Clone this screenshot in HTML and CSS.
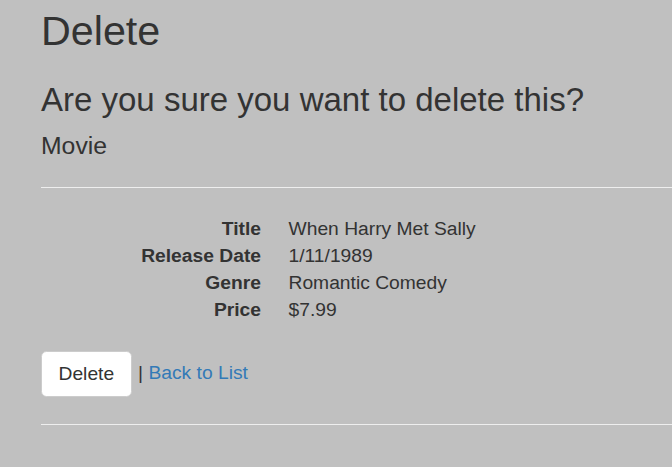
FILE: index.html
```html
<!DOCTYPE html>
<html>
<head>
<meta charset="utf-8">
<title>Delete</title>
<link rel="stylesheet" href="styles.css">
</head>
<body>
<div class="container body-content">
  <h2 class="page-title">Delete</h2>
  <h3 class="confirm">Are you sure you want to delete this?</h3>
  <div>
    <h4 class="entity">Movie</h4>
    <hr class="rule">
    <dl class="details">
      <dt>Title</dt>
      <dd>When Harry Met Sally</dd>
      <dt>Release Date</dt>
      <dd>1/11/1989</dd>
      <dt>Genre</dt>
      <dd>Romantic Comedy</dd>
      <dt>Price</dt>
      <dd>$7.99</dd>
    </dl>
    <form class="actions-form">
      <div class="form-actions">
        <button type="button" class="btn">Delete</button> <span class="sep">|</span> <a class="link" href="#">Back to List</a>
      </div>
    </form>
  </div>
  <hr class="rule">
</div>
</body>
</html>
```
FILE: styles.css
```css
html, body {
  margin: 0;
  padding: 0;
  background: #c0c0c0;
}
body {
  font-family: "Liberation Sans", Arial, sans-serif;
  font-size: 19.25px;
  line-height: 27px;
  color: #333;
  overflow: hidden;
}
.container {
  padding: 9px 0 0 41px;
}
.page-title {
  font-size: 41.25px;
  font-weight: 500;
  line-height: 1.1;
  margin: 0 0 13.75px;
}
.confirm {
  font-size: 33px;
  font-weight: 500;
  line-height: 1.1;
  margin: 27.5px 0 13.75px;
}
.entity {
  font-size: 24.75px;
  font-weight: 500;
  line-height: 1.1;
  margin: 13.75px 0 13.75px;
}
.rule {
  border: 0;
  border-top: 1px solid #eee;
  margin: 27.5px 0;
  height: 0;
}
.details {
  margin: 1px 0 27.5px;
  display: grid;
  grid-template-columns: 220px 1fr;
  column-gap: 27.5px;
}
.details dt {
  font-weight: 700;
  text-align: right;
  white-space: nowrap;
}
.details dd {
  margin: 0;
}
.btn {
  font-family: inherit;
  font-size: 19.25px;
  line-height: 27px;
  color: #333;
  background: #fff;
  border: 1px solid #ccc;
  border-radius: 5.5px;
  padding: 8.5px 16.5px;
  margin: 0;
  vertical-align: middle;
}
.sep {
  margin-left: 1px;
}
.link {
  color: #337ab7;
  text-decoration: none;
}
```
